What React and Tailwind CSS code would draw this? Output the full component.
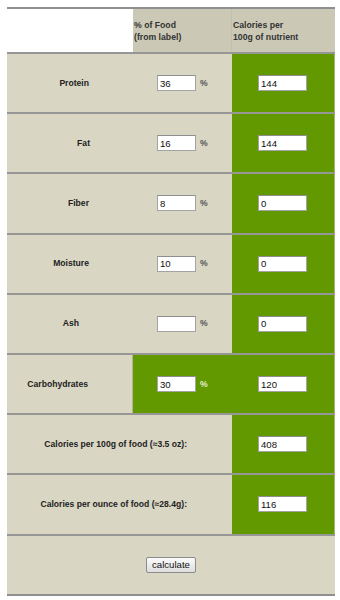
import React from 'react';

// nutrient rows: label, % of food, calories per 100g of nutrient
const rows = [
  { label: 'Protein', pct: '36', cal: '144', pr: 'pr-[44px]' },
  { label: 'Fat', pct: '16', cal: '144', pr: 'pr-[43px]' },
  { label: 'Fiber', pct: '8', cal: '0', pr: 'pr-[44px]' },
  { label: 'Moisture', pct: '10', cal: '0', pr: 'pr-[44px]' },
  { label: 'Ash', pct: '', cal: '0', pr: 'pr-[54px]' },
];

const Field = ({ value, w }) => (
  <input
    readOnly
    value={value}
    className={`${w} h-[16px] bg-white border border-[#a3a3a3] border-t-[#8e8e8e] px-[2px] text-[9.6px] text-[#111] outline-none`}
    style={{ fontFamily: '"Liberation Sans", Arial, sans-serif' }}
  />
);

function Row({ children }) {
  return <div className="flex h-[60.2px] border-t-2 border-[#969696]">{children}</div>;
}

export default function App() {
  return (
    <div
      className="bg-white w-[340px] h-[600px] pt-[7px] pl-[7px]"
      style={{ fontFamily: '"Liberation Sans", Arial, sans-serif' }}
    >
      <div className="w-[328px] border-t-2 border-[#8f8f8f] border-b-2 border-b-[#8f8f8f]">
        {/* header */}
        <div className="flex h-[43px]">
          <div className="w-[126px] bg-white" />
          <div className="w-[98px] bg-[#cbc9b6] flex items-center pl-[1px] text-[8.7px] font-bold leading-[12px] text-[#333]">
            % of Food<br />(from label)
          </div>
          <div className="w-[104px] bg-[#cbc9b6] flex items-center pl-[1px] text-[8.7px] font-bold leading-[12px] text-[#333] border-l border-[#c2c0ad]">
            Calories per<br />100g of nutrient
          </div>
        </div>

        {rows.map((r) => (
          <Row key={r.label}>
            <div className="w-[225px] bg-[#d9d6c3] flex items-center">
              <div className={`w-[126px] flex justify-end ${r.pr} text-[8.6px] font-bold text-[#222]`}>{r.label}</div>
              <div className="flex items-center pl-[24px] gap-[4px]">
                <Field value={r.pct} w="w-[39px]" />
                <span className="text-[8.6px] font-bold text-[#555]">%</span>
              </div>
            </div>
            <div className="w-[103px] bg-[#639900] flex items-center pl-[26px] border-r border-[#9fb57a]">
              <Field value={r.cal} w="w-[49px]" />
            </div>
          </Row>
        ))}

        {/* carbohydrates */}
        <Row>
          <div className="w-[126px] bg-[#d9d6c3] flex items-center justify-end pr-[44px] text-[8.6px] font-bold text-[#222] border-r border-[#b5b3a3]">
            Carbohydrates
          </div>
          <div className="w-[99px] bg-[#639900] flex items-center pl-[24px] gap-[4px]">
            <Field value="30" w="w-[39px]" />
            <span className="text-[8.6px] font-bold text-[#e4ecd2]">%</span>
          </div>
          <div className="w-[103px] bg-[#639900] flex items-center pl-[26px] border-r border-[#9fb57a]">
            <Field value="120" w="w-[49px]" />
          </div>
        </Row>

        <Row>
          <div className="w-[225px] bg-[#d9d6c3] flex items-center justify-end pr-[45px] text-[8.6px] font-bold text-[#222]">
            Calories per 100g of food (≈3.5 oz):
          </div>
          <div className="w-[103px] bg-[#639900] flex items-center pl-[26px] border-r border-[#9fb57a]">
            <Field value="408" w="w-[49px]" />
          </div>
        </Row>

        <Row>
          <div className="w-[225px] bg-[#d9d6c3] flex items-center justify-end pr-[45px] text-[8.6px] font-bold text-[#222]">
            Calories per ounce of food (≈28.4g):
          </div>
          <div className="w-[103px] bg-[#639900] flex items-center pl-[26px] border-r border-[#9fb57a]">
            <Field value="116" w="w-[49px]" />
          </div>
        </Row>

        {/* calculate */}
        <Row>
          <div className="w-full bg-[#d9d6c3] flex items-center justify-center">
            <button className="w-[50px] h-[16px] rounded-[2px] border border-[#8b8b8b] bg-gradient-to-b from-[#fbfbfb] to-[#dedede] text-[9.6px] text-[#111] leading-none">
              calculate
            </button>
          </div>
        </Row>
      </div>
    </div>
  );
}
